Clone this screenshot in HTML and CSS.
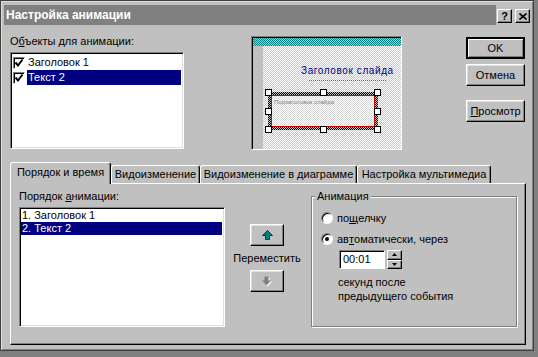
FILE: index.html
```html
<!DOCTYPE html>
<html lang="ru">
<head>
  <meta charset="UTF-8">
  <title>Настройка анимации</title>
  <link rel="stylesheet" href="styles.css">
</head>
<body>

<div class="dialog">
  <!-- Заголовок окна -->
  <div class="titlerow">
    <div class="titlebar">Настройка анимации</div>
    <div class="tbtns">
      <span class="tbtn">?</span>
      <span class="tbtn">
        <svg width="8" height="7" viewBox="0 0 8 7"><path d="M0.5 0.5 L7.5 6.5 M7.5 0.5 L0.5 6.5" stroke="#000" stroke-width="1.6"/></svg>
      </span>
    </div>
  </div>

  <!-- Верхняя часть: объекты, просмотр слайда, кнопки -->
  <div class="top">
    <div class="objects">
      <div class="label">О<u>б</u>ъекты для анимации:</div>
      <div class="listbox obj-list">
        <div class="item">
          <span class="check"><svg width="10" height="10" viewBox="0 0 10 10"><path d="M1.5 4.5 L4 7.5 L8.5 1.5" fill="none" stroke="#000" stroke-width="2"/></svg></span>
          <span class="txt">Заголовок 1</span>
        </div>
        <div class="item sel">
          <span class="check"><svg width="10" height="10" viewBox="0 0 10 10"><path d="M1.5 4.5 L4 7.5 L8.5 1.5" fill="none" stroke="#000" stroke-width="2"/></svg></span>
          <span class="txt">Текст 2</span>
        </div>
      </div>
    </div>

    <div class="preview">
      <div class="slide-stripe"></div>
      <div class="slide-band"></div>
      <div class="slide-title">Заголовок слайда</div>
      <div class="slide-underline"></div>
      <div class="sel-frame">
        <div class="sel-inner">Подзаголовок слайда</div>
        <span class="handle h-tl"></span>
        <span class="handle h-tc"></span>
        <span class="handle h-tr"></span>
        <span class="handle h-ml"></span>
        <span class="handle h-mr"></span>
        <span class="handle h-bl"></span>
        <span class="handle h-bc"></span>
        <span class="handle h-br"></span>
      </div>
    </div>

    <div class="buttons">
      <button class="btn default">OK</button>
      <button class="btn">Отмена</button>
      <button class="btn view"><u>П</u>росмотр</button>
    </div>
  </div>

  <!-- Вкладки -->
  <div class="tabs">
    <div class="tab active">Порядок и время</div>
    <div class="tab t2">Видоизменение</div>
    <div class="tab t3">Видоизменение в диаграмме</div>
    <div class="tab t4">Настройка мультимедиа</div>
  </div>

  <div class="panel">
    <div class="order">
      <div class="label">Порядок <u>а</u>нимации:</div>
      <div class="listbox order-list">
        <div class="row">1. Заголовок 1</div>
        <div class="row sel">2. Текст 2</div>
      </div>
    </div>

    <div class="move">
      <button class="btn arrow">
        <svg width="11" height="10" viewBox="0 0 11 10"><path d="M5.5 0.5 L10.5 5.5 L7.5 5.5 L7.5 9.5 L3.5 9.5 L3.5 5.5 L0.5 5.5 Z" fill="#008080" stroke="#004040" stroke-width="1"/></svg>
      </button>
      <div class="move-label">Переместить</div>
      <button class="btn arrow">
        <svg width="12" height="11" viewBox="0 0 12 11"><path d="M4.5 1.5 L8.5 1.5 L8.5 5.5 L11 5.5 L6.5 10.5 L2 5.5 L4.5 5.5 Z" fill="#fff"/><path d="M3.5 0.5 L7.5 0.5 L7.5 4.5 L10 4.5 L5.5 9.5 L1 4.5 L3.5 4.5 Z" fill="#808080"/></svg>
      </button>
    </div>

    <fieldset class="group">
      <legend>Анимация</legend>
      <div class="radio"><span class="dot"></span>по <u>щ</u>елчку</div>
      <div class="radio"><span class="dot on"></span>ав<u>т</u>оматически, через</div>
      <div class="timer">
        <span class="field">00:01</span>
        <span class="spin">
          <span class="spin-btn"><svg width="5" height="3" viewBox="0 0 5 3"><path d="M2.5 0 L5 3 L0 3 Z" fill="#000"/></svg></span>
          <span class="spin-btn"><svg width="5" height="3" viewBox="0 0 5 3"><path d="M0 0 L5 0 L2.5 3 Z" fill="#000"/></svg></span>
        </span>
      </div>
      <div class="note">секунд после<br>предыдущего события</div>
    </fieldset>
  </div>
</div>

</body>
</html>
```

FILE: styles.css
```css
body {
  margin: 0;
  background: #808080;
  font-family: "Liberation Sans", Arial, sans-serif;
  font-size: 11px;
  color: #000;
}
/* Окно диалога */
.dialog {
  width: 534px;
  height: 351px;
  box-sizing: border-box;
  background: #c0c0c0;
  border: 1px solid #404040;
  box-shadow: inset 1px 1px #dfdfdf, inset -1px -1px #808080;
  padding: 4px 3px 0;
}
.titlerow {
  display: flex;
  height: 20px;
}
.titlebar {
  width: 492px;
  box-sizing: border-box;
  background: #808080;
  color: #fff;
  font-weight: bold;
  font-size: 12px;
  line-height: 20px;
  padding-left: 2px;
}
.tbtns {
  display: flex;
  gap: 3px;
  margin: 4px 0 0 1px;
}
.tbtn {
  width: 15px;
  height: 14px;
  box-sizing: border-box;
  background: #c0c0c0;
  border: 1px solid;
  border-color: #fff #000 #000 #fff;
  box-shadow: inset -1px -1px #808080;
  font-weight: bold;
  font-size: 11px;
  line-height: 11px;
  display: flex;
  align-items: center;
  justify-content: center;
}
/* Общие элементы */
.label {
  line-height: 13px;
  margin-bottom: 4px;
}
.listbox {
  background: #fff;
  box-sizing: border-box;
  border: 1px solid;
  border-color: #808080 #fff #fff #808080;
  box-shadow: inset 1px 1px #000, inset -1px -1px #dfdfdf;
}
.btn {
  display: flex;
  align-items: center;
  justify-content: center;
  box-sizing: border-box;
  background: #c0c0c0;
  border: 1px solid;
  border-color: #fff #000 #000 #fff;
  box-shadow: inset -1px -1px #808080, inset 1px 1px #dfdfdf;
  font-family: inherit;
  font-size: 11px;
  color: #000;
  padding: 0;
}
/* Верхняя часть */
.top {
  display: flex;
  margin: 10px 0 0 6px;
}
.objects {
  width: 174px;
}
.obj-list {
  height: 97px;
  padding: 2px 2px 0 2px;
}
.item {
  display: flex;
  align-items: center;
  height: 15px;
}
.check {
  width: 12px;
  height: 12px;
  box-sizing: border-box;
  margin-right: 2px;
  background: #fff;
  border: 1px solid;
  border-color: #808080 #fff #fff #808080;
  box-shadow: inset 1px 1px #000;
  display: flex;
  align-items: center;
  justify-content: center;
}
.item .txt {
  flex: 1;
  line-height: 15px;
  padding-left: 1px;
}
.item.sel .txt {
  background: #000080;
  color: #fff;
}
/* Миниатюра слайда */
.preview {
  position: relative;
  width: 151px;
  height: 114px;
  box-sizing: border-box;
  margin: 1px 0 0 67px;
  border: 1px solid;
  border-color: #808080 #fff #fff #808080;
  box-shadow: inset 1px 1px #000;
  background: repeating-conic-gradient(#fff 0 25%, #c8c8c8 0 50%) 0 0 / 2px 2px;
}
.slide-stripe {
  position: absolute;
  top: 1px;
  left: 1px;
  right: 0;
  height: 8px;
  background: repeating-conic-gradient(#008080 0 25%, #c0c0c0 0 50%) 0 0 / 2px 2px;
}
.slide-band {
  position: absolute;
  top: 9px;
  left: 1px;
  bottom: 0;
  width: 10px;
  background: #c0c0c0;
}
.slide-title {
  position: absolute;
  top: 27px;
  left: 49px;
  color: #000080;
  font-size: 10px;
  letter-spacing: 0.6px;
  line-height: 13px;
}
.slide-underline {
  position: absolute;
  top: 43px;
  left: 57px;
  width: 77px;
  height: 1px;
  background: repeating-linear-gradient(90deg, #008080 0 1px, transparent 1px 2px);
}
.sel-frame {
  position: absolute;
  top: 55px;
  left: 16px;
  width: 110px;
  height: 38px;
  box-sizing: border-box;
  padding: 3px;
  background: repeating-conic-gradient(#000 0 25%, #c0c0c0 0 50%) 0 0 / 2px 2px;
}
.sel-inner {
  height: 100%;
  box-sizing: border-box;
  border: 1px solid #d00000;
  background: repeating-conic-gradient(#fff 0 25%, #d8d8d8 0 50%) 0 0 / 2px 2px;
  color: #808080;
  font-size: 6px;
  line-height: 8px;
  padding: 2px 0 0 2px;
  white-space: nowrap;
}
.handle {
  position: absolute;
  width: 7px;
  height: 7px;
  box-sizing: border-box;
  background: #fff;
  border: 1px solid #000;
}
.h-tl, .h-tc, .h-tr { top: -3px; }
.h-ml, .h-mr { top: 16px; }
.h-bl, .h-bc, .h-br { bottom: -3px; }
.h-tl, .h-ml, .h-bl { left: -3px; }
.h-tc, .h-bc { left: 52px; }
.h-tr, .h-mr, .h-br { right: -3px; }
/* Кнопки справа */
.buttons {
  display: flex;
  flex-direction: column;
  width: 59px;
  margin: 2px 0 0 64px;
}
.buttons .btn {
  height: 22px;
  margin-bottom: 5px;
}
.buttons .btn.default {
  border: 2px solid #000;
  box-shadow: inset 1px 1px #fff, inset -1px -1px #808080;
}
.buttons .btn.view {
  margin-top: 9px;
}
/* Вкладки */
.tabs {
  display: flex;
  align-items: flex-end;
  height: 21px;
  margin: 12px 0 0 6px;
  position: relative;
  z-index: 1;
}
.tab {
  height: 18px;
  box-sizing: border-box;
  border: 1px solid;
  border-bottom: 0;
  border-color: #fff #000 transparent #fff;
  border-radius: 3px 3px 0 0;
  box-shadow: inset -1px 0 #808080;
  background: #c0c0c0;
  line-height: 16px;
  text-align: center;
}
.tab.active {
  width: 101px;
  height: 22px;
  margin-bottom: -1px;
  line-height: 18px;
}
.tab.t2 { width: 89px; }
.tab.t3 { width: 157px; }
.tab.t4 { width: 134px; }
.panel {
  display: flex;
  align-items: flex-start;
  width: 516px;
  height: 162px;
  box-sizing: border-box;
  margin-left: 6px;
  padding: 6px 0 0 8px;
  border: 1px solid;
  border-color: #fff #000 #000 #fff;
  box-shadow: inset -1px -1px #808080;
}
.order {
  width: 206px;
}
.order-list {
  height: 120px;
  padding: 1px 2px 0 1px;
}
.row {
  height: 13px;
  line-height: 13px;
  padding-left: 1px;
}
.row.sel {
  background: #000080;
  color: #fff;
}
.move {
  width: 68px;
  margin-left: 8px;
  padding-top: 34px;
  display: flex;
  flex-direction: column;
  align-items: center;
}
.arrow {
  width: 34px;
  height: 22px;
}
.move-label {
  line-height: 13px;
  margin: 6px 0 5px;
}
/* Группа "Анимация" */
.group {
  width: 206px;
  height: 137px;
  box-sizing: border-box;
  margin: 0 0 0 10px;
  padding: 0 0 0 3px;
  border: 1px solid #808080;
  box-shadow: 1px 1px #fff, inset 1px 1px #fff;
}
.group legend {
  padding: 0 2px;
  line-height: 13px;
  background: #c0c0c0;
}
.radio {
  display: flex;
  align-items: center;
  height: 13px;
  margin: 8px 0 0 6px;
}
.dot {
  position: relative;
  width: 12px;
  height: 12px;
  box-sizing: border-box;
  margin-right: 4px;
  border-radius: 50%;
  background: #fff;
  border: 1px solid;
  border-color: #808080 #fff #fff #808080;
  box-shadow: inset 1px 1px #000;
}
.dot.on::after {
  content: "";
  position: absolute;
  left: 3px;
  top: 3px;
  width: 4px;
  height: 4px;
  border-radius: 50%;
  background: #000;
}
.timer {
  display: flex;
  margin: 5px 0 0 24px;
}
.field {
  width: 46px;
  height: 19px;
  box-sizing: border-box;
  background: #fff;
  border: 1px solid;
  border-color: #808080 #fff #fff #808080;
  box-shadow: inset 1px 1px #000;
  padding-left: 3px;
  line-height: 17px;
}
.spin {
  display: flex;
  flex-direction: column;
  margin-left: 2px;
  width: 15px;
  height: 19px;
}
.spin-btn {
  flex: 1;
  display: flex;
  align-items: center;
  justify-content: center;
  box-sizing: border-box;
  border: 1px solid;
  border-color: #fff #000 #000 #fff;
  box-shadow: inset -1px -1px #808080;
}
.note {
  margin: 6px 0 0 23px;
  line-height: 14px;
}
```
